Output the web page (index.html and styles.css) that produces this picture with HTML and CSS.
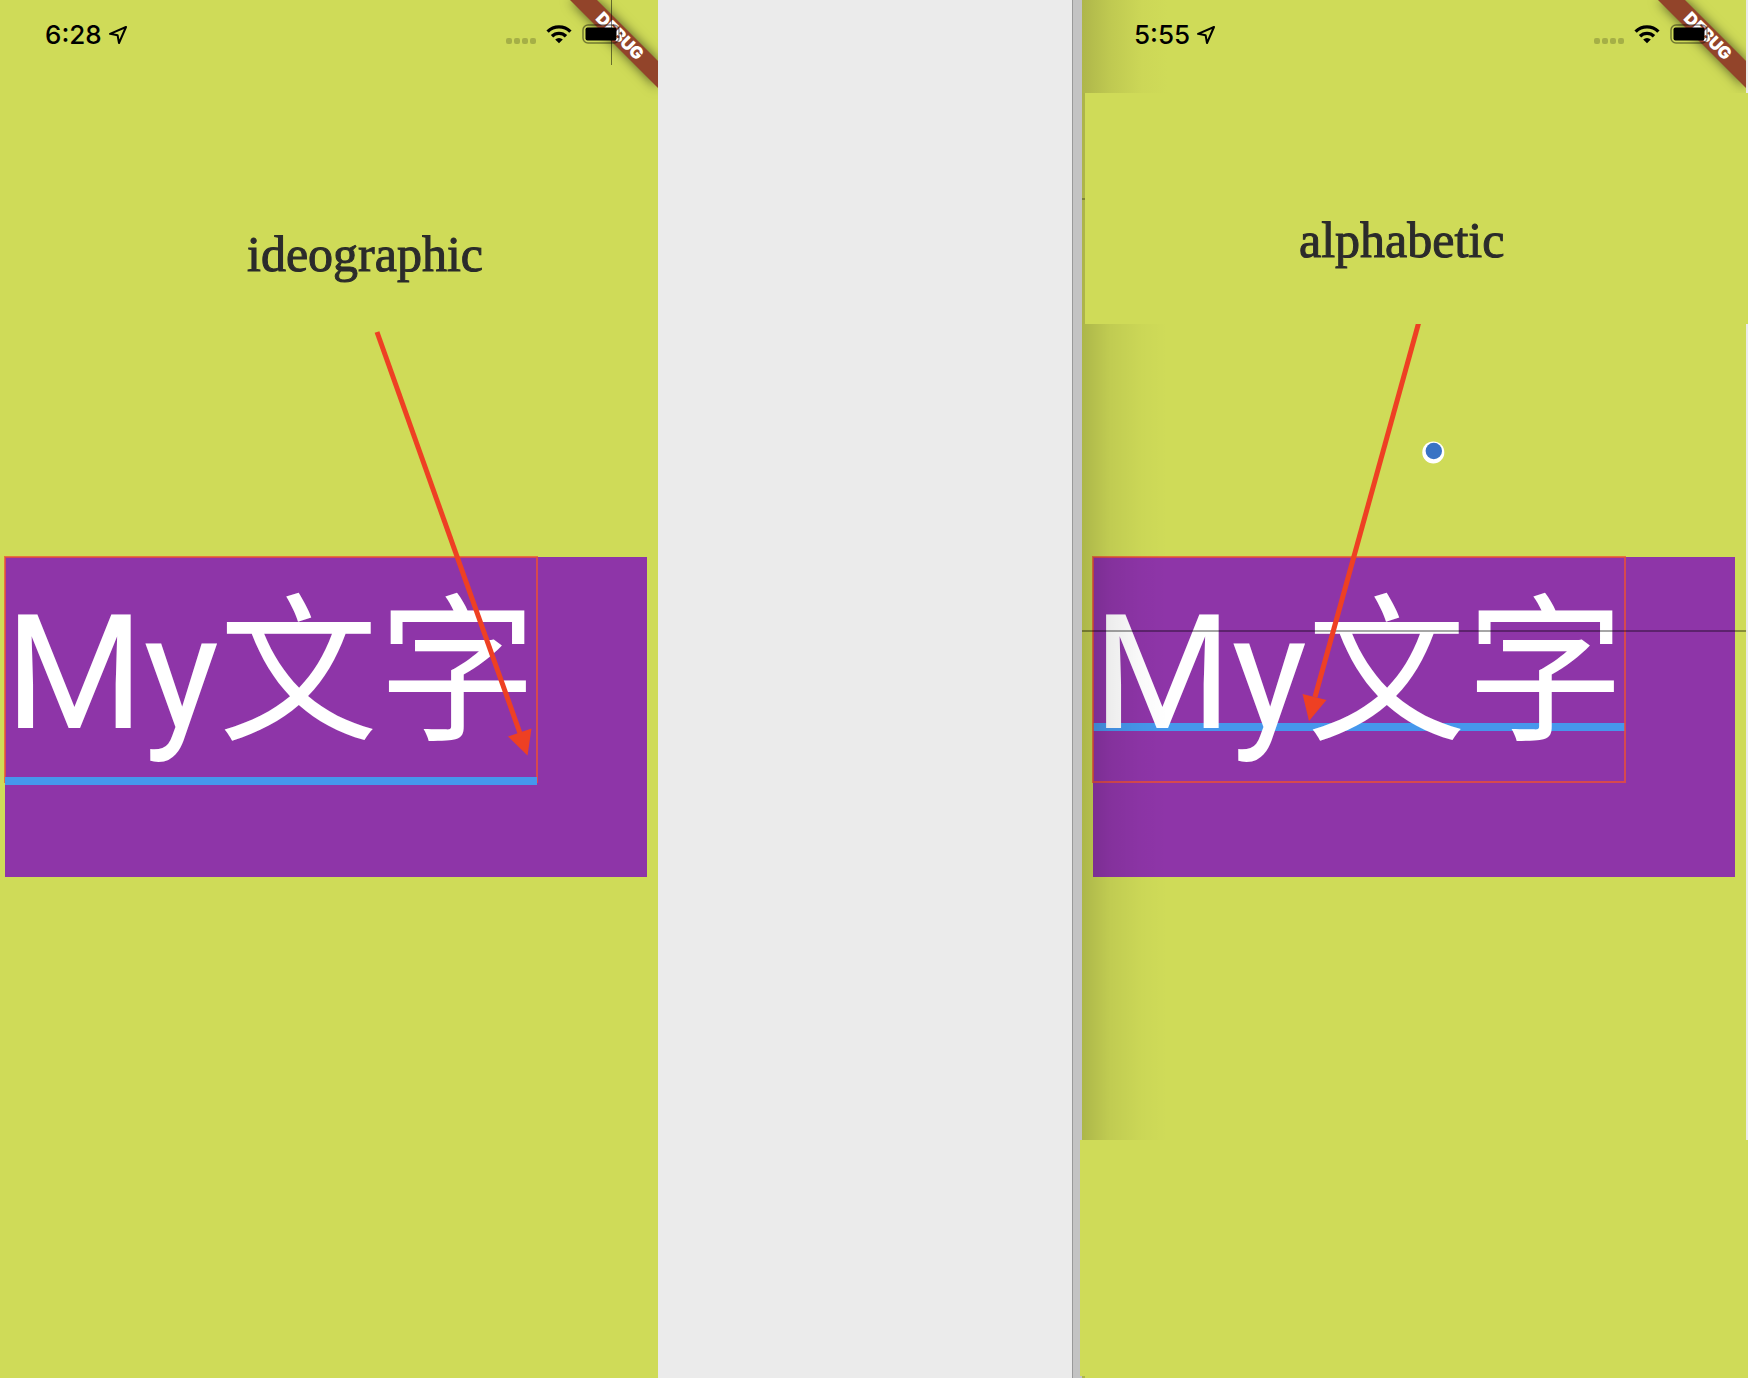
FILE: index.html
```html
<!DOCTYPE html>
<html lang="en">
<head>
<meta charset="utf-8">
<title>Text baselines</title>
<link rel="stylesheet" href="styles.css">
</head>
<body>
<svg class="defs" aria-hidden="true">
  <defs>
    <symbol id="location" viewBox="0 0 20 20"><path d="M18 2 2 8.800l7.600 1.400L11 18Z" fill="none" stroke="#000" stroke-width="2" stroke-linejoin="round"/></symbol>
    <symbol id="signal" viewBox="0 0 30 20"><g fill="#000" fill-opacity=".2"><rect x="0" y="14" width="6" height="6" rx="2"/><rect x="8" y="14" width="6" height="6" rx="2"/><rect x="16" y="14" width="6" height="6" rx="2"/><rect x="24" y="14" width="6" height="6" rx="2"/></g></symbol>
    <symbol id="wifi" viewBox="0 0 26 20"><g fill="none" stroke="#000" stroke-width="3.400"><path d="M1.600 7.600a16.200 16.200 0 0 1 22.800 0"/><path d="M6 12.200a10 10 0 0 1 14 0"/></g><path d="M13 19.200 9.200 15.500a5.400 5.400 0 0 1 7.600 0Z"/></symbol>
    <symbol id="battery" viewBox="0 0 42 20"><rect x="1" y="1" width="36" height="18" rx="5" fill="none" stroke="#000" stroke-opacity=".45" stroke-width="1.500"/><rect x="3.500" y="3.500" width="31" height="13" rx="2"/><path d="M39 7q3 3 0 6Z" fill-opacity=".4"/></symbol>
    <symbol id="banner" viewBox="0 0 100 100">
      <path d="M12 0H39L100 61V88Z" fill="#92442a" class="ribbon"/>
      <text x="62" y="36" transform="rotate(45 62 36)" dy="6" text-anchor="middle" class="ribbon-text">DEBUG</text>
    </symbol>
  </defs>
</svg>
<main class="board">
  <section class="phone">
    <header class="status">
      <time class="clock">6:28</time>
      <svg class="location"><use href="#location"/></svg>
      <svg class="signal"><use href="#signal"/></svg>
      <svg class="wifi"><use href="#wifi"/></svg>
      <svg class="battery"><use href="#battery"/></svg>
      <svg class="banner"><use href="#banner"/></svg>
      <i class="cursor-line"></i>
    </header>
    <div class="caption"><h2>ideographic</h2></div>
    <div class="stage">
      <div class="box"><p class="sample ideographic"><span>My文字</span></p></div>
      <svg class="arrow" width="658" height="560" aria-hidden="true">
        <path d="M377 8 521 412" stroke="#ee4023" stroke-width="5"/>
        <path d="M508 412.500 531.500 404.500 527.500 431.500Z" fill="#ee4023"/>
      </svg>
    </div>
    <div class="rest"></div>
  </section>
  <div class="gutter"></div>
  <section class="phone shaded">
    <header class="status">
      <time class="clock">5:55</time>
      <svg class="location"><use href="#location"/></svg>
      <svg class="signal"><use href="#signal"/></svg>
      <svg class="wifi"><use href="#wifi"/></svg>
      <svg class="battery"><use href="#battery"/></svg>
      <svg class="banner"><use href="#banner"/></svg>
    </header>
    <div class="caption"><h2>alphabetic</h2></div>
    <div class="stage">
      <div class="box"><p class="sample alphabetic"><span>My文字</span></p></div>
      <i class="guide"></i>
      <svg class="arrow" width="664" height="560" aria-hidden="true">
        <path d="M338 -6 233 373" stroke="#ee4023" stroke-width="5"/>
        <path d="M220.500 370 244.500 376 227 397Z" fill="#ee4023"/>
        <circle cx="351.300" cy="128.400" r="11" fill="#fff"/>
        <circle cx="351.800" cy="127" r="8.200" fill="#3873c4"/>
      </svg>
    </div>
    <div class="rest"></div>
  </section>
</main>
</body>
</html>
```
FILE: styles.css
```css
* { box-sizing: border-box; }
body { margin: 0; background: #ebebeb; }
h2, p { margin: 0; font-weight: 400; }
.defs { position: absolute; width: 0; height: 0; }

.board {
  display: grid;
  grid-template-columns: 658fr 424fr 666fr;
  min-height: 100vh;
}

.phone {
  display: flex;
  flex-direction: column;
  min-width: 0;
  background: #cfdb58;
}

.gutter {
  background: linear-gradient(to left, #c3c3c3 9px, #999 9px, #999 10px, #ebebeb 10px);
}

/* status bar */
.status {
  position: relative;
  display: flex;
  align-items: flex-start;
  height: 93px;
  padding: 24px 34px 0 45px;
}
.clock { font: 500 26px/22px Inter, sans-serif; }
.status svg { flex: none; height: 20px; }
.status .location { width: 20px; margin: 1px auto 0 6px; }
.status .signal { width: 30px; margin-right: 10px; }
.status .wifi { width: 26px; margin-right: 10px; }
.status .battery { position: relative; z-index: 2; width: 42px; }
.phone .status .banner {
  position: absolute;
  top: 0;
  right: 0;
  width: 100px;
  height: 100px;
}
.ribbon { filter: drop-shadow(0 0 6px rgba(0, 0, 0, .6)); }
.ribbon-text { font: 900 17px Inter, sans-serif; fill: #fff; }
.cursor-line {
  position: absolute;
  z-index: 2;
  top: 0;
  right: 46px;
  width: 1px;
  height: 65px;
  background: rgba(0, 0, 0, .5);
}

/* caption above each sample */
.caption { height: 231px; padding: 133px 0 0 247px; }
.caption h2 {
  font: 400 50px/56px "Liberation Serif", serif;
  color: #2b2b2b;
  -webkit-text-stroke: 1px #2b2b2b;
}

/* sample area */
.stage {
  position: relative;
  height: 816px;
  padding: 233px 11px 0 5px;
  overflow: hidden;
}
.box { height: 320px; background: #8e35a8; }
.sample {
  position: relative;
  width: fit-content;
  height: 225px;
  padding-top: 8px;
  font: 400 159px/217px Roboto, "Noto Sans CJK SC", sans-serif;
  color: #fff;
}
.sample span { position: relative; }
.sample::before,
.sample::after {
  content: "";
  position: absolute;
  left: 0;
  right: 0;
}
.sample::before {
  z-index: 1;
  height: 8px;
  background: #4697ec;
}
.sample::after {
  inset: -1px;
  border: 2px solid rgba(238, 80, 50, .75);
}
.ideographic::before { top: 220px; }
.alphabetic::before { z-index: 0; top: 166px; }
.ideographic::after { border-bottom: 0; }
.arrow { position: absolute; z-index: 2; top: 0; left: 0; }
.rest { flex: 1; }

/* right-hand phone: window shadow on its left edge */
.shaded { background: linear-gradient(to right, #adb54a 3px, #cfdb58 3px); }
.shaded .status,
.shaded .stage { border-right: 2px solid #ebebeb; }
.shaded .status {
  padding-left: 52px;
  background: linear-gradient(to right, #aeb64a, #bfc951 28px, #ccd757 60px, #cfdb58 86px);
}
.shaded .caption {
  position: relative;
  margin-left: 3px;
  padding: 119px 0 0 214px;
  background: #cfdb58;
}
.shaded .caption::before {
  content: "";
  position: absolute;
  top: 105px;
  left: -3px;
  width: 3px;
  height: 2px;
  background: #7d8336;
}
.shaded .stage { padding-left: 11px; background: #cfdb58; }
.shaded .stage::after {
  content: "";
  position: absolute;
  inset: 0 auto 0 0;
  width: 86px;
  background: linear-gradient(to right, rgba(0, 0, 0, .17), rgba(0, 0, 0, .07) 28px, rgba(0, 0, 0, .02) 60px, transparent);
}
.shaded .rest {
  z-index: 1;
  margin: 0 0 2px -2px;
  background: #cfdb58;
}
.guide {
  position: absolute;
  top: 306px;
  left: 0;
  right: 0;
  height: 2px;
  background: rgba(0, 0, 0, .35);
}
```
